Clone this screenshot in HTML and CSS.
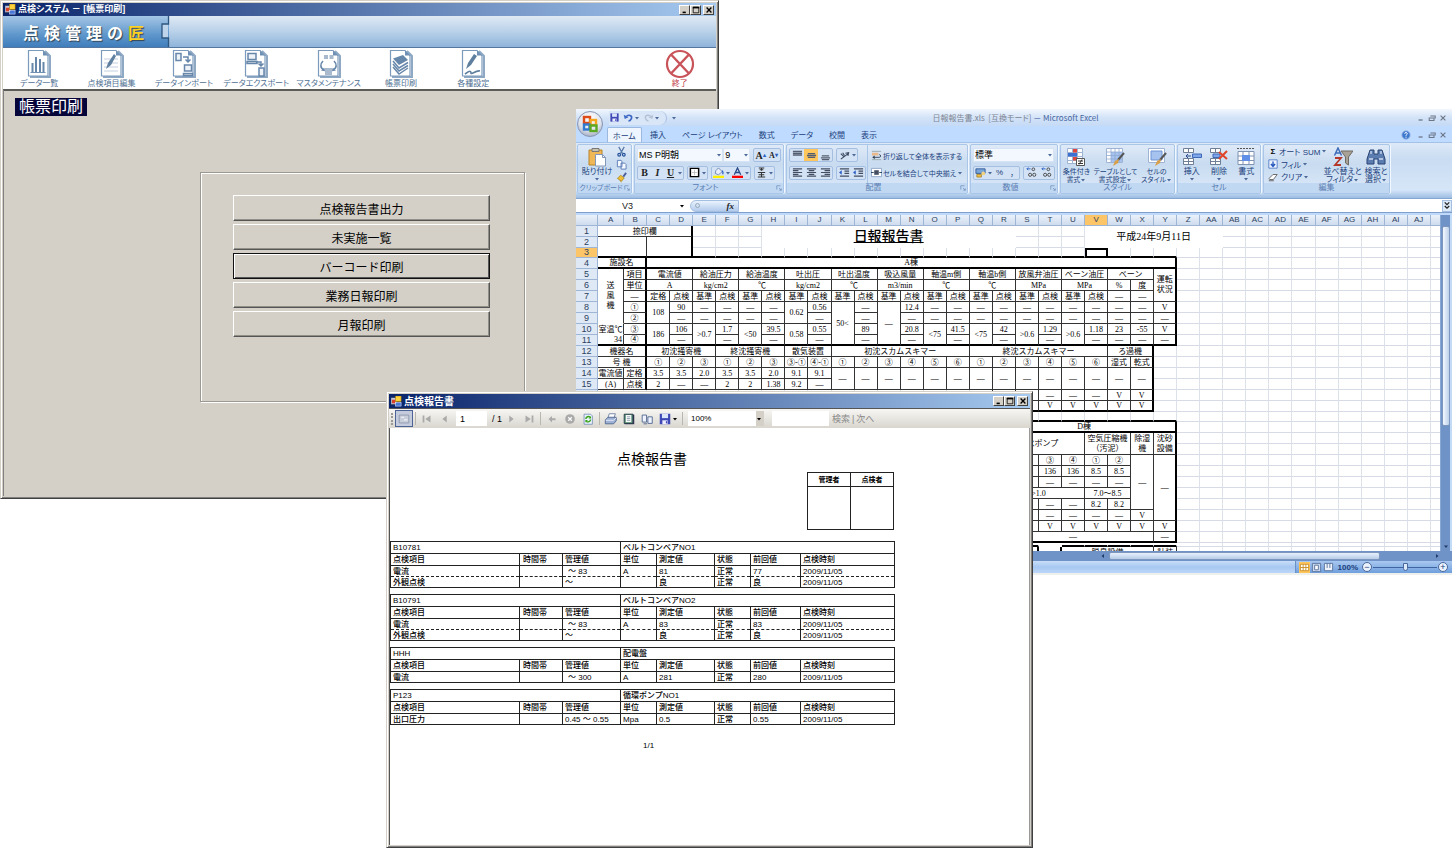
FILE: index.html
```
<!DOCTYPE html>
<html lang="ja">
<head>
<meta charset="utf-8">
<title>点検システム</title>
<link rel="stylesheet" href="styles.css">
</head>
<body>
<svg class="defs" aria-hidden="true">
  <symbol id="app" viewBox="0 0 12 12"><rect x="0" y="2" width="6" height="7" fill="#c8d4f0" stroke="#555" stroke-width=".6"/><rect x="1" y="4" width="4" height="4" fill="#d8412c"/><rect x="5" y="0" width="6" height="6" fill="#ffd23c" stroke="#a77a00" stroke-width=".6"/><rect x="5" y="7" width="6" height="4" fill="#4a78d8" stroke="#dfe8ff" stroke-width=".6"/></symbol>
  <symbol id="min" viewBox="0 0 10 10"><rect x="2" y="7" width="4" height="2"/></symbol>
  <symbol id="max" viewBox="0 0 10 10"><path d="M1.5 1.5h7v7h-7z" fill="none" stroke="#000"/><path d="M1 1h8v2H1z"/></symbol>
  <symbol id="cls" viewBox="0 0 10 10"><path d="M2 2l6 6M8 2l-6 6" stroke="#000" stroke-width="1.7"/></symbol>
  <symbol id="page" viewBox="0 0 24 30"><path d="M18 2l5 5v21H3" fill="none" stroke="#8fa9c4" stroke-width="2"/><path d="M1.500 1.500H16l5 5V27H1.500z" fill="#fff" stroke="#7c9abb" stroke-width="1.200"/><path d="M16 1.500v5h5z" fill="#6f90b4"/></symbol>
  <symbol id="i-list" viewBox="0 0 24 30"><use href="#page"/><path d="M3.500 23.500h15" stroke="#7190b2"/><path d="M5.500 14v9M9 8v15M13 10v13M16.500 13v10" stroke="#6787aa" stroke-width="2"/></symbol>
  <symbol id="i-edit" viewBox="0 0 24 30"><use href="#page"/><path d="M4 10h14M4 14h14M4 18h14M4 22h14" stroke="#c2cfdd"/><path d="M6 20l2-6 6-9 2 2-5 9z" fill="#5f7f9f"/></symbol>
  <symbol id="i-imp" viewBox="0 0 24 30"><use href="#page"/><path d="M4 4.500h5v7H4zM12.500 16h7v6h-7zM11.500 24.500h9v2h-9z" fill="#eef3f8" stroke="#6787aa" stroke-width="1.500"/><path d="M11 8h5v4M13.500 10.500L16 13l2.500-2.500" fill="none" stroke="#6787aa" stroke-width="1.500"/></symbol>
  <symbol id="i-exp" viewBox="0 0 24 30"><use href="#page"/><path d="M4 4.500h8v6H4zM3 12.500h10v2H3zM15 19h5v8h-5z" fill="#eef3f8" stroke="#6787aa" stroke-width="1.500"/><path d="M12 13h5v3M14.500 14.500L17 17l2.500-2.500" fill="none" stroke="#6787aa" stroke-width="1.500"/></symbol>
  <symbol id="i-mst" viewBox="0 0 24 30"><use href="#page"/><path d="M7 6h4v4H7zM12.500 6h4v4h-4zM8 19h7v7H8z" fill="#a9bace"/><path d="M6 12c-3 3-3 7 1 9M17 12c3 3 3 7-1 9" fill="none" stroke="#6787aa" stroke-width="1.600"/><path d="M4 21.500l4 .8-.6-3.600zM19 21.500l-4 .8.6-3.600z" fill="#6787aa"/></symbol>
  <symbol id="i-prn" viewBox="0 0 24 30"><use href="#page"/><path d="M4 9.500L14 6l5 5-9 5z" fill="#6787aa"/><path d="M4 12l6 7 9-5.500M4 15l6 7 9-5.500M4 18l6 7 9-6" fill="none" stroke="#6787aa" stroke-width="1.500"/></symbol>
  <symbol id="i-set" viewBox="0 0 24 30"><use href="#page"/><path d="M5 20l2-6 6-9 3 2-6 9z" fill="#5f7f9f"/><path d="M4 25c5-4 6-3 6-1s5-3 9-2" fill="none" stroke="#5f7f9f" stroke-width="1.700"/></symbol>
  <symbol id="i-end" viewBox="0 0 30 30"><circle cx="15" cy="15" r="13" fill="none" stroke="#c8545a" stroke-width="2.200"/><path d="M6.500 6l17 18M23.500 6l-17 18" stroke="#c8545a" stroke-width="2.400"/></symbol>

  <symbol id="r-tree" viewBox="0 0 16 16"><path d="M2.500 3.500h11v9h-11z" fill="#c9cedb" stroke="#8e96ab"/><path d="M5 6h3M8 9h4" stroke="#fff"/></symbol>
  <symbol id="r-first" viewBox="0 0 16 16"><path d="M4 4v8" stroke="#aaa" stroke-width="2"/><path d="M12 4v8L6 8z" fill="#aaa"/></symbol>
  <symbol id="r-prev" viewBox="0 0 16 16"><path d="M10 4v8L5 8z" fill="#aaa"/></symbol>
  <symbol id="r-next" viewBox="0 0 16 16"><path d="M6 4v8l5-4z" fill="#aaa"/></symbol>
  <symbol id="r-last" viewBox="0 0 16 16"><path d="M12 4v8" stroke="#aaa" stroke-width="2"/><path d="M4 4v8l6-4z" fill="#aaa"/></symbol>
  <symbol id="r-back" viewBox="0 0 16 16"><path d="M4 8l4-3.500V7h4v2.500H8V12z" fill="#aaa"/></symbol>
  <symbol id="r-stop" viewBox="0 0 16 16"><circle cx="8" cy="8" r="5.500" fill="#aaa"/><path d="M6 6l4 4M10 6l-4 4" stroke="#fff" stroke-width="1.300"/></symbol>
  <symbol id="r-ref" viewBox="0 0 16 16"><path d="M3.500 2.500H11l2 2v9.500H3.500z" fill="#e9f2ff" stroke="#7c92b8"/><path d="M5.500 8a3 3 0 015-2M11 8.500a3 3 0 01-5 2" fill="none" stroke="#3ba316" stroke-width="1.600"/><path d="M11.500 4.500v3h-3zM5 12V9h3z" fill="#3ba316"/></symbol>
  <symbol id="r-print" viewBox="0 0 16 16"><path d="M6 2h7l-2 6H4z" fill="#fff" stroke="#6c7ea0"/><path d="M1.500 9l3-3h9.500v4l-3 3.500H1.500z" fill="#9db2d4" stroke="#4c628c"/><path d="M2 9.500h9l3-3" fill="none" stroke="#eef"/></symbol>
  <symbol id="r-lay" viewBox="0 0 16 16"><path d="M3 3h11v11H3z" fill="#335"/><path d="M2.500 2.500h10v10.500h-10z" fill="#6fa38a" stroke="#234"/><path d="M4.500 3.500h6v8h-6z" fill="#fff"/><path d="M5.500 5.500h4M5.500 7.500h4M5.500 9.500h4" stroke="#89a"/></symbol>
  <symbol id="r-pages" viewBox="0 0 16 16"><path d="M2.500 3.500h5v8h-5zM9 5.500h5V13H9z" fill="#eef3ff" stroke="#4c628c"/><path d="M4 13.500h4" stroke="#4c628c"/></symbol>
  <symbol id="save" viewBox="0 0 16 16"><path d="M2 2h12v12H2z" fill="#3e49b5"/><path d="M4.500 2h7v5h-7z" fill="#dce6fa"/><path d="M5 9.500h6V14H5z" fill="#eef"/><path d="M9 10.500h1.500V13H9z" fill="#3e49b5"/></symbol>
  <symbol id="dd" viewBox="0 0 6 6"><path d="M1 2h4L3 4.500z" fill="currentColor"/></symbol>

  <symbol id="office" viewBox="0 0 28 28"><defs><radialGradient id="og" cx=".5" cy=".3" r=".75"><stop offset="0" stop-color="#fff"/><stop offset=".6" stop-color="#dfe3ec"/><stop offset="1" stop-color="#9aa5bd"/></radialGradient></defs><circle cx="14" cy="14" r="12.500" fill="url(#og)" stroke="#8797b5"/><g fill="none" stroke-width="2.400"><rect x="8" y="7" width="6" height="6" stroke="#dd4b1a"/><rect x="14.500" y="10" width="5.500" height="5" stroke="#f4a71c"/><rect x="8" y="14.500" width="5.500" height="5" stroke="#2f79cf"/><rect x="14.500" y="15.500" width="6" height="5.500" stroke="#5aa823"/></g></symbol>
  <symbol id="undo" viewBox="0 0 16 16"><path d="M5 6c5-3 9 0 7 4-1 2-3 3-4 3" fill="none" stroke="#3a66c4" stroke-width="2.400"/><path d="M1 4l1.500 6L8 7.500z" fill="#3a66c4"/></symbol>
  <symbol id="redo" viewBox="0 0 16 16"><path d="M11 6C6 3 2 6 4 10c1 2 3 3 4 3" fill="none" stroke="#b4c0d4" stroke-width="2"/><path d="M15 4l-1.500 6L8 7.500z" fill="#b4c0d4"/></symbol>
  <symbol id="paste" viewBox="0 0 20 20"><path d="M2 3h13v15H2z" fill="#f0b757" stroke="#b98428"/><path d="M5 1.500h7v3H5z" fill="#c9c4b4" stroke="#777"/><path d="M8.500 7.500h7l3 3V19h-10z" fill="#fff" stroke="#8296b8"/><path d="M15.500 7.500v3h3" fill="none" stroke="#8296b8"/></symbol>
  <symbol id="cut" viewBox="0 0 12 12"><path d="M3 1l4 7M9 1L5 8" stroke="#5577a5" stroke-width="1.300"/><circle cx="3.500" cy="9.500" r="1.500" fill="none" stroke="#27539b" stroke-width="1.300"/><circle cx="8.500" cy="9.500" r="1.500" fill="none" stroke="#27539b" stroke-width="1.300"/></symbol>
  <symbol id="copy" viewBox="0 0 12 12"><path d="M1.500 1.500h4l1 1v6h-5zM5.500 4.500h4l1.500 1.500v5H5.500z" fill="#f4f8ff" stroke="#5a7ab5"/></symbol>
  <symbol id="brush" viewBox="0 0 12 12"><path d="M8 5l3-4" stroke="#4a5f9a" stroke-width="2"/><path d="M5 3.500l4 3L6 10 1.500 7z" fill="#f0bf35" stroke="#9a7210" stroke-width=".7"/><path d="M4 9l2 2" stroke="#b98d17"/></symbol>
  <symbol id="border" viewBox="0 0 12 12"><path d="M1.500 1.500h9v9h-9z" fill="#fff" stroke="#000" stroke-width="1.600"/><path d="M6 3v6M3 6h6" stroke="#aaa" stroke-width=".7"/></symbol>
  <symbol id="fill" viewBox="0 0 12 12"><path d="M3 4l3-3 4 4-4 3.500L2.500 7z" fill="#e8eefb" stroke="#556f9f" stroke-width=".8"/><path d="M10 4c1.500 2 1 3 .5 4" stroke="#2b5fc4" fill="none" stroke-width="1.300"/><path d="M0 9.500h12V12H0z" fill="#fff000"/></symbol>
  <symbol id="fcol" viewBox="0 0 12 12"><path d="M2.500 8.500L6 1l3.500 7.500M4 6h4" fill="none" stroke="#2a4988" stroke-width="1.400"/><path d="M0 9.500h12V12H0z" fill="#f00"/></symbol>
  <symbol id="ruby" viewBox="0 0 12 12"><path d="M3 1h6M6 1v3M4 3h4M2 6h8M6 6v5M3 8.500h6M2 11h8" stroke="#333" fill="none" stroke-width="1.100"/></symbol>
  <symbol id="vt" viewBox="0 0 12 12"><path d="M1 1.500h10M1 3.500h10M1 5.500h10" stroke="#555e70" stroke-width="1.500"/></symbol>
  <symbol id="vm" viewBox="0 0 12 12"><path d="M2 4h8M1 6h10M2 8h8" stroke="#555e70" stroke-width="1.500"/></symbol>
  <symbol id="vb" viewBox="0 0 12 12"><path d="M2 6.500h8M1 8.500h10M2 10.500h8" stroke="#555e70" stroke-width="1.400"/></symbol>
  <symbol id="al" viewBox="0 0 12 12"><path d="M1 2h10M1 4h6M1 6h10M1 8h6M1 10h10" stroke="#444d60" stroke-width="1.200"/></symbol>
  <symbol id="ac" viewBox="0 0 12 12"><path d="M1 2h10M3 4h6M1 6h10M3 8h6M1 10h10" stroke="#444d60" stroke-width="1.200"/></symbol>
  <symbol id="ar" viewBox="0 0 12 12"><path d="M1 2h10M5 4h6M1 6h10M5 8h6M1 10h10" stroke="#444d60" stroke-width="1.200"/></symbol>
  <symbol id="ind" viewBox="0 0 12 12"><path d="M1 2h10M6 4.500h5M6 7h5M1 10h10" stroke="#444d60" stroke-width="1.300"/><path d="M0 6l3-2.500v5z" fill="#2b5fc4"/></symbol>
  <symbol id="ang" viewBox="0 0 12 12"><path d="M2 10l8-6M7 3.500L10.500 3l-.8 3.500M2 4l3 3M4 3l2 3" fill="none" stroke="#39465f" stroke-width="1.200"/></symbol>
  <symbol id="wrap" viewBox="0 0 12 12"><path d="M1 1.500h10M1 10.500h10" stroke="#9aa" /><path d="M1 3h7v3H1z" fill="#e9b98a"/><path d="M2 8h7c2 0 2-3 0-3" fill="none" stroke="#345"/><path d="M4 6v4L1.500 8z" fill="#345"/></symbol>
  <symbol id="merge" viewBox="0 0 12 12"><path d="M.5 1.500h11v9H.5z" fill="#fff" stroke="#8ea4c8"/><path d="M3.500 3.500h5v5h-5z" fill="#444d60"/><path d="M0 6h3M9 6h3" stroke="#245"/></symbol>
  <symbol id="cur" viewBox="0 0 12 12"><path d="M1 2h10v5H1z" fill="#7aa6d8" stroke="#345c9a"/><path d="M2 8h5v3H2z" fill="#f1bf42" stroke="#93701a" stroke-width=".7"/><circle cx="9" cy="7" r="2" fill="#f1d382"/></symbol>
  <symbol id="d0" viewBox="0 0 12 12"><path d="M5 2H1M2.500.5L1 2l1.500 1.500" fill="none" stroke="#2b5fc4"/><circle cx="8" cy="2.500" r="1.500" fill="none" stroke="#444"/><circle cx="4.500" cy="8.500" r="1.700" fill="none" stroke="#444"/><circle cx="9" cy="8.500" r="1.700" fill="none" stroke="#444"/></symbol>
  <symbol id="cond" viewBox="0 0 20 20"><path d="M1.500 1.500h15v15h-15zM6.500 1.500v15M11.500 1.500v15M1.500 5.500h15M1.500 9.500h15M1.500 13.500h15" fill="#fff" stroke="#9fb3d2"/><path d="M7 2h4v3.500H7zM7 10h4v3.500H7z" fill="#e2463a"/><path d="M2 6h9v3.500H2z" fill="#3b6fd0"/><path d="M10.500 11.500h8v7h-8z" fill="#fff" stroke="#555"/><path d="M12 14h5M12 16.500h5M16 12.500l-3 5" stroke="#333"/></symbol>
  <symbol id="tbl" viewBox="0 0 20 20"><path d="M1.500 1.500h16v14h-16z" fill="#fff" stroke="#9fb3d2"/><path d="M6 5h11v10H6z" fill="#a6c2ee"/><path d="M6 1.500v14M10 1.500v14M14 1.500v14M1.500 5h16M1.500 8.500h16M1.500 12h16" stroke="#8fa9d2" stroke-width=".8"/><path d="M19 6l-6 7" stroke="#555" stroke-width="2"/><path d="M14 12l-1 4-5 3 2-5z" fill="#d9a048"/></symbol>
  <symbol id="cst" viewBox="0 0 20 20"><path d="M1.500 1.500h16v14h-16z" fill="#fff" stroke="#9fb3d2"/><path d="M4 4h11v9H4z" fill="#a6c2ee" stroke="#6d94d4"/><path d="M19 6l-6 7" stroke="#555" stroke-width="2"/><path d="M14 12l-1 4-5 3 2-5z" fill="#d9a048"/></symbol>
  <symbol id="ins" viewBox="0 0 20 20"><path d="M1.500 1.500h10v4h-10zM6.500 1.500v4M1.500 11.500h10v6h-10zM6.500 11.500v6M1.500 14.500h10" fill="#fff" stroke="#6f7f96"/><path d="M10.500 7h9v3.500h-9z" fill="#7fa6ea" stroke="#3f68b6"/><path d="M9 9H4M6 7L4 9l2 2" fill="none" stroke="#2b4a8a"/></symbol>
  <symbol id="del" viewBox="0 0 20 20"><path d="M1.500 1.500h10v4h-10zM6.500 1.500v4M1.500 11.500h10v6h-10zM6.500 11.500v6M1.500 14.500h10" fill="#fff" stroke="#6f7f96"/><path d="M4 7h7v3.500H4z" fill="#7fa6ea" stroke="#3f68b6"/><path d="M10 5l8 7M18 4l-8 8" stroke="#e04428" stroke-width="2"/></symbol>
  <symbol id="fmt" viewBox="0 0 20 20"><path d="M1 1.500h18" stroke="#555" stroke-dasharray="2 1"/><path d="M2 4.500h16v13H2zM7 4.500v13M13 4.500v13M2 9h16M2 13.500h16" fill="#fff" stroke="#7f92b2"/><path d="M6 8h8v6H6z" fill="#5f8fe6"/></symbol>
  <symbol id="fdn" viewBox="0 0 12 12"><path d="M1 1h10v10H1z" fill="#eaf2ff" stroke="#4a76c4"/><path d="M6 3v5M3.500 6L6 9l2.500-3" fill="none" stroke="#2356bd" stroke-width="1.600"/></symbol>
  <symbol id="ers" viewBox="0 0 12 12"><path d="M1 8l5-5h5L6.500 9H2z" fill="#fff" stroke="#555"/><path d="M1 10.500h6" stroke="#555"/></symbol>
  <symbol id="sort" viewBox="0 0 20 20"><path d="M1.500 8.500L5 1l3.500 7.500M3 6h4" fill="none" stroke="#3d6cb8" stroke-width="1.500"/><path d="M2 11h6l-6 7h6" fill="none" stroke="#b5372a" stroke-width="1.800"/><path d="M8 4h12l-4.500 6v8l-3-2v-6z" fill="#a8a196" stroke="#6f6a62"/></symbol>
  <symbol id="bino" viewBox="0 0 20 20"><path d="M4 3h4v4h4V3h4l3 9v5h-7v-5H8v5H1v-5z" fill="#5b7cae" stroke="#2b4574"/><path d="M3 12h4M13 12h4M5 4v3M15 4v3" stroke="#cfdcf2" stroke-width="1.300"/></symbol>
  <symbol id="help" viewBox="0 0 12 12"><circle cx="6" cy="6" r="5" fill="#3d79cf" stroke="#9cb8e2"/><path d="M4.500 4.500c0-2 3-2 3 0 0 1-1.500 1-1.500 2.500M6 8v1.300" stroke="#fff" fill="none" stroke-width="1.200"/></symbol>
  <symbol id="lch" viewBox="0 0 8 8"><path d="M1 6V1h5M4 4l3 3M7 4.500V7H4.500" fill="none" stroke="#6d8fbd"/></symbol>
  <symbol id="xmin" viewBox="0 0 10 10"><path d="M2 7.500h5" stroke="#6c7687" stroke-width="1.600"/></symbol>
  <symbol id="xmax" viewBox="0 0 10 10"><path d="M3 2.500h6v3M1.500 5h6v3h-6z" fill="none" stroke="#6c7687" stroke-width="1.300"/></symbol>
  <symbol id="xcls" viewBox="0 0 10 10"><path d="M2 2l6 6M8 2L2 8" stroke="#6c7687" stroke-width="1.400"/></symbol>
  <symbol id="chev" viewBox="0 0 8 10"><path d="M1.500 1.500L4 4l2.500-2.500M1.500 5.500L4 8l2.500-2.500" fill="none" stroke="#222" stroke-width="1.400"/></symbol>
  <symbol id="v1" viewBox="0 0 12 12"><path d="M1.500 2.500h9v7h-9zM1.500 6h9M4.500 2.500v7M7.500 2.500v7" fill="#fff" stroke="#c98f25"/></symbol>
  <symbol id="v2" viewBox="0 0 12 12"><path d="M1.500 1.500h9v9h-9z" fill="#cdd9ee" stroke="#58729d"/><path d="M4 3.500h4v5H4z" fill="#fff" stroke="#58729d"/></symbol>
  <symbol id="v3" viewBox="0 0 12 12"><path d="M1.500 1.500h9v8h-9zM4.500 1.500v5M7.500 1.500v5" fill="#eef3fb" stroke="#58729d"/></symbol>
</svg>

<main class="desktop">

<section class="win main-win">
  <header class="caption">
    <svg class="app-ico"><use href="#app"/></svg>
    <h1>点検システム － [帳票印刷]</h1>
    <div class="sysbtns">
      <button aria-label="最小化"><svg><use href="#min"/></svg></button><button aria-label="最大化"><svg><use href="#max"/></svg></button><button class="x" aria-label="閉じる"><svg><use href="#cls"/></svg></button>
    </div>
  </header>
  <div class="banner">
    <div class="brand"><span>点</span><span>検</span><span>管</span><span>理</span><span>の</span><span class="gold">匠</span></div>
    <svg class="notch" viewBox="0 0 9 31"><path d="M7 8H1v14h6z" fill="#bdd4eb"/><path d="M7.500 0v8h-6.500v14h6.500v9" fill="none" stroke="#2c557f" stroke-width="1.300"/></svg>
  </div>
  <nav class="tools">
    <button><svg><use href="#i-list"/></svg>データ一覧</button>
    <button><svg><use href="#i-edit"/></svg>点検項目編集</button>
    <button><svg><use href="#i-imp"/></svg>データインポート</button>
    <button><svg><use href="#i-exp"/></svg>データエクスポート</button>
    <button><svg><use href="#i-mst"/></svg>マスタメンテナンス</button>
    <button><svg><use href="#i-prn"/></svg>帳票印刷</button>
    <button><svg><use href="#i-set"/></svg>各種設定</button>
    <button class="end"><svg><use href="#i-end"/></svg>終了</button>
  </nav>
  <div class="client">
    <h2>帳票印刷</h2>
    <div class="group">
      <button>点検報告書出力</button>
      <button>未実施一覧</button>
      <button class="default">バーコード印刷</button>
      <button>業務日報印刷</button>
      <button>月報印刷</button>
    </div>
  </div>
</section>

<section class="excel">
  <header class="x-title">
    <button class="orb" aria-label="Office ボタン"><svg><use href="#office"/></svg></button>
    <div class="qat">
      <button aria-label="保存"><svg><use href="#save"/></svg></button>
      <button aria-label="元に戻す"><svg><use href="#undo"/></svg><svg class="d"><use href="#dd"/></svg></button>
      <button class="dim" aria-label="やり直し"><svg><use href="#redo"/></svg><svg class="d"><use href="#dd"/></svg></button>
    </div>
    <svg class="d more"><use href="#dd"/></svg>
    <h1><span>日報報告書.xls&nbsp; [互換モード]</span> － Microsoft Excel</h1>
    <div class="xsys"><button aria-label="最小化"><svg><use href="#xmin"/></svg></button><button aria-label="元に戻す"><svg><use href="#xmax"/></svg></button><button aria-label="閉じる"><svg><use href="#xcls"/></svg></button></div>
  </header>
  <nav class="x-tabs">
    <button class="on">ホーム</button><button>挿入</button><button>ページ レイアウト</button><button>数式</button><button>データ</button><button>校閲</button><button>表示</button>
    <div class="xsys"><button aria-label="ヘルプ"><svg class="help"><use href="#help"/></svg></button><button aria-label="最小化"><svg><use href="#xmin"/></svg></button><button aria-label="元に戻す"><svg><use href="#xmax"/></svg></button><button aria-label="閉じる"><svg><use href="#xcls"/></svg></button></div>
  </nav>
  <div class="ribbon">
    <div class="rg g-clip">
      <div class="rb">
        <button class="big">
          <svg><use href="#paste"/></svg>貼り付け<svg class="d"><use href="#dd"/></svg></button>
        <div class="stack">
          <button aria-label="切り取り"><svg><use href="#cut"/></svg></button><button aria-label="コピー"><svg><use href="#copy"/></svg></button><button aria-label="書式のコピー"><svg><use href="#brush"/></svg></button>
        </div>
      </div>
      <h3><span>クリップボード</span><svg><use href="#lch"/></svg></h3>
    </div>
    <div class="rg g-font">
      <div class="rb two">
        <div class="ln">
          <label class="combo fname"><select aria-label="フォント"><option>MS P明朝</option></select><svg class="d"><use href="#dd"/></svg></label>
          <label class="combo fsize"><select aria-label="サイズ"><option>9</option></select><svg class="d"><use href="#dd"/></svg></label>
          <div class="seg push"><button class="serif">A<sup>▴</sup></button><button class="serif sm">A<sup>▾</sup></button></div>
        </div>
        <div class="ln">
          <div class="seg"><button class="serif">B</button><button class="serif it">I</button><button class="serif ul">U</button><svg class="d"><use href="#dd"/></svg></div>
          <div class="seg"><button aria-label="罫線"><svg><use href="#border"/></svg></button><svg class="d"><use href="#dd"/></svg></div>
          <div class="seg"><button aria-label="塗りつぶし"><svg><use href="#fill"/></svg></button><svg class="d"><use href="#dd"/></svg><button aria-label="フォントの色"><svg><use href="#fcol"/></svg></button><svg class="d"><use href="#dd"/></svg></div>
          <div class="seg"><button aria-label="ふりがな"><svg><use href="#ruby"/></svg></button><svg class="d"><use href="#dd"/></svg></div>
        </div>
      </div>
      <h3><span>フォント</span><svg><use href="#lch"/></svg></h3>
    </div>
    <div class="rg g-align">
      <div class="rb">
        <div class="two al">
          <div class="ln"><div class="seg"><button aria-label="上揃え"><svg><use href="#vt"/></svg></button><button class="hot" aria-label="上下中央"><svg><use href="#vm"/></svg></button><button aria-label="下揃え"><svg><use href="#vb"/></svg></button></div><div class="seg"><button aria-label="方向"><svg><use href="#ang"/></svg></button><svg class="d"><use href="#dd"/></svg></div></div>
          <div class="ln"><div class="seg"><button aria-label="左揃え"><svg><use href="#al"/></svg></button><button aria-label="中央揃え"><svg><use href="#ac"/></svg></button><button aria-label="右揃え"><svg><use href="#ar"/></svg></button></div><div class="seg"><button aria-label="インデント解除"><svg><use href="#ind"/></svg></button><button aria-label="インデント"><svg><use href="#ind"/></svg></button></div></div>
        </div>
        <div class="two txt">
          <button><svg><use href="#wrap"/></svg>折り返して全体を表示する</button>
          <button><svg><use href="#merge"/></svg>セルを結合して中央揃え<svg class="d"><use href="#dd"/></svg></button>
        </div>
      </div>
      <h3><span>配置</span><svg><use href="#lch"/></svg></h3>
    </div>
    <div class="rg g-num">
      <div class="rb two">
        <div class="ln"><label class="combo nfmt"><select aria-label="表示形式"><option>標準</option></select><svg class="d"><use href="#dd"/></svg></label></div>
        <div class="ln"><div class="seg"><button aria-label="通貨"><svg><use href="#cur"/></svg></button><svg class="d"><use href="#dd"/></svg><button>%</button><button>，</button></div><div class="seg"><button aria-label="小数点を増やす"><svg><use href="#d0"/></svg></button><button aria-label="小数点を減らす"><svg><use href="#d0"/></svg></button></div></div>
      </div>
      <h3><span>数値</span><svg><use href="#lch"/></svg></h3>
    </div>
    <div class="rg g-style">
      <div class="rb bigs">
        <button class="big"><svg><use href="#cond"/></svg>条件付き<span>書式<svg class="d"><use href="#dd"/></svg></span></button>
        <button class="big"><svg><use href="#tbl"/></svg>テーブルとして<span>書式設定<svg class="d"><use href="#dd"/></svg></span></button>
        <button class="big"><svg><use href="#cst"/></svg>セルの<span>スタイル<svg class="d"><use href="#dd"/></svg></span></button>
      </div>
      <h3><span>スタイル</span></h3>
    </div>
    <div class="rg g-cell">
      <div class="rb bigs">
        <button class="big"><svg><use href="#ins"/></svg>挿入<svg class="d"><use href="#dd"/></svg></button>
        <button class="big"><svg><use href="#del"/></svg>削除<svg class="d"><use href="#dd"/></svg></button>
        <button class="big"><svg><use href="#fmt"/></svg>書式<svg class="d"><use href="#dd"/></svg></button>
      </div>
      <h3><span>セル</span></h3>
    </div>
    <div class="rg g-edit">
      <div class="rb">
        <div class="three">
          <button><b>Σ</b>オート SUM<svg class="d"><use href="#dd"/></svg></button>
          <button><svg><use href="#fdn"/></svg>フィル<svg class="d"><use href="#dd"/></svg></button>
          <button><svg><use href="#ers"/></svg>クリア<svg class="d"><use href="#dd"/></svg></button>
        </div>
        <button class="big"><svg><use href="#sort"/></svg>並べ替えと<span>フィルタ<svg class="d"><use href="#dd"/></svg></span></button>
        <button class="big"><svg><use href="#bino"/></svg>検索と<span>選択<svg class="d"><use href="#dd"/></svg></span></button>
      </div>
      <h3><span>編集</span></h3>
    </div>
  </div>
  <div class="fbar">
    <input class="cellname" aria-label="名前ボックス" value="V3"><svg class="d"><use href="#dd"/></svg>
    <span class="fx"><i></i><em>fx</em></span>
    <input class="formula" aria-label="数式バー">
    <button aria-label="展開"><svg><use href="#chev"/></svg></button>
  </div>
  <div class="book">
    <div class="sheet"><table id="sheet" class="grid"></table></div>
    <div class="vbar"><i class="vthumb"></i><svg class="d"><use href="#dd"/></svg></div>
  </div>
  <div class="hbar"><svg class="d left"><use href="#dd"/></svg><i class="hthumb"></i><svg class="d right"><use href="#dd"/></svg></div>
  <footer class="status">
    <div class="zoomer">
      <button class="hot" aria-label="標準"><svg><use href="#v1"/></svg></button><button aria-label="ページ レイアウト"><svg><use href="#v2"/></svg></button><button aria-label="改ページ"><svg><use href="#v3"/></svg></button>
      <span>100%</span>
      <button class="rnd">−</button><input type="range" aria-label="ズーム" value="50"><button class="rnd">+</button>
    </div>
  </footer>
</section>

<section class="win report">
  <header class="caption">
    <svg class="app-ico"><use href="#app"/></svg>
    <h1>点検報告書</h1>
    <div class="sysbtns">
      <button aria-label="最小化"><svg><use href="#min"/></svg></button><button aria-label="最大化"><svg><use href="#max"/></svg></button><button class="x" aria-label="閉じる"><svg><use href="#cls"/></svg></button>
    </div>
  </header>
  <div class="rtools">
    <i class="grip"></i>
    <button class="sel" aria-label="見出しマップ"><svg><use href="#r-tree"/></svg></button><i class="sep"></i>
    <button aria-label="先頭"><svg><use href="#r-first"/></svg></button><button aria-label="前へ"><svg><use href="#r-prev"/></svg></button>
    <input class="pg" aria-label="ページ" value="1"><span class="of">/ 1</span>
    <button aria-label="次"><svg><use href="#r-next"/></svg></button><button aria-label="最後"><svg><use href="#r-last"/></svg></button><i class="sep"></i>
    <button aria-label="戻る"><svg><use href="#r-back"/></svg></button><button aria-label="中止"><svg><use href="#r-stop"/></svg></button><button aria-label="更新"><svg><use href="#r-ref"/></svg></button><i class="sep"></i>
    <button aria-label="印刷"><svg><use href="#r-print"/></svg></button><button aria-label="印刷レイアウト"><svg><use href="#r-lay"/></svg></button><button aria-label="ページ設定"><svg><use href="#r-pages"/></svg></button><button class="wide" aria-label="エクスポート"><svg><use href="#save"/></svg><svg class="d"><use href="#dd"/></svg></button><i class="sep"></i>
    <label class="zoomsel"><select aria-label="倍率"><option>100%</option></select><span><svg class="d"><use href="#dd"/></svg></span></label>
    <input class="find" aria-label="検索文字列">
    <span class="links"><button>検索</button> | <button>次へ</button></span>
  </div>
  <div class="paper">
    <h2>点検報告書</h2>
    <table class="sign"><tr><th>管理者</th><th>点検者</th></tr><tr><td></td><td></td></tr></table>
    <table class="rep">
      <colgroup><col class="c1"><col class="c2"><col class="c3"><col class="c4"><col class="c5"><col class="c6"><col class="c7"><col class="c8"></colgroup>
      <tr><td colspan="3">B10781</td><td colspan="5">ベルトコンベアNO1</td></tr>
      <tr><th>点検項目</th><th>時間帯</th><th>管理値</th><th>単位</th><th>測定値</th><th>状態</th><th>前回値</th><th>点検時刻</th></tr>
      <tr class="dash"><td>電流</td><td></td><td class="in">～ 83</td><td>A</td><td>81</td><td>正常</td><td>77</td><td>2009/11/05</td></tr>
      <tr><td>外観点検</td><td></td><td>～</td><td></td><td>良</td><td>正常</td><td>良</td><td>2009/11/05</td></tr>
    </table>
    <table class="rep">
      <colgroup><col class="c1"><col class="c2"><col class="c3"><col class="c4"><col class="c5"><col class="c6"><col class="c7"><col class="c8"></colgroup>
      <tr><td colspan="3">B10791</td><td colspan="5">ベルトコンベアNO2</td></tr>
      <tr><th>点検項目</th><th>時間帯</th><th>管理値</th><th>単位</th><th>測定値</th><th>状態</th><th>前回値</th><th>点検時刻</th></tr>
      <tr class="dash"><td>電流</td><td></td><td class="in">～ 83</td><td>A</td><td>83</td><td>正常</td><td>83</td><td>2009/11/05</td></tr>
      <tr><td>外観点検</td><td></td><td>～</td><td></td><td>良</td><td>正常</td><td>良</td><td>2009/11/05</td></tr>
    </table>
    <table class="rep">
      <colgroup><col class="c1"><col class="c2"><col class="c3"><col class="c4"><col class="c5"><col class="c6"><col class="c7"><col class="c8"></colgroup>
      <tr><td colspan="3">HHH</td><td colspan="5">配電盤</td></tr>
      <tr><th>点検項目</th><th>時間帯</th><th>管理値</th><th>単位</th><th>測定値</th><th>状態</th><th>前回値</th><th>点検時刻</th></tr>
      <tr><td>電流</td><td></td><td class="in">～ 300</td><td>A</td><td>281</td><td>正常</td><td>280</td><td>2009/11/05</td></tr>
    </table>
    <table class="rep">
      <colgroup><col class="c1"><col class="c2"><col class="c3"><col class="c4"><col class="c5"><col class="c6"><col class="c7"><col class="c8"></colgroup>
      <tr><td colspan="3">P123</td><td colspan="5">循環ポンプNO1</td></tr>
      <tr><th>点検項目</th><th>時間帯</th><th>管理値</th><th>単位</th><th>測定値</th><th>状態</th><th>前回値</th><th>点検時刻</th></tr>
      <tr><td>出口圧力</td><td></td><td>0.45 ～ 0.55</td><td>Mpa</td><td>0.5</td><td>正常</td><td>0.55</td><td>2009/11/05</td></tr>
    </table>
    <p class="pageno">1/1</p>
  </div>
</section>
</main>
<script src="sheet.js"></script>
</body>
</html>
```
FILE: styles.css
```
* { box-sizing: border-box; }
html, body { margin: 0; }
body { background: #fff; font-family: "Liberation Sans", "Noto Sans CJK JP", sans-serif; font-size: 9px; color: #000; }
button, input, select { font: inherit; color: inherit; border: 0; padding: 0; margin: 0; background: none; border-radius: 0; }
button { display: inline-flex; align-items: center; justify-content: center; white-space: nowrap; }
select { appearance: none; }
h1, h2, h3, p { margin: 0; font-weight: normal; font-size: inherit; }
svg { display: block; flex: none; }
.defs { position: absolute; width: 0; height: 0; }
.d { width: 6px; height: 6px; color: #4a6898; }
.desktop { position: relative; min-height: 100vh; overflow: hidden; }

/* Classic windows */
.win { position: absolute; display: flex; flex-direction: column; background: #d4d0c8; border: 1px solid; border-color: #d4d0c8 #404040 #404040 #d4d0c8; box-shadow: inset 1px 1px #fff, inset -1px -1px #808080; padding: 2px; }
.main-win { left: 0; top: 0; width: 719px; height: 499px; }
.caption { display: flex; align-items: center; flex: none; height: 13px; padding: 0 2px; background: linear-gradient(90deg, #0a246a, #a6caf0); color: #fff; }
.app-ico { width: 11px; height: 11px; }
.caption h1 { flex: 1; padding-left: 2px; font-size: 9px; line-height: 13px; font-weight: bold; white-space: nowrap; font-feature-settings: "palt"; }
.sysbtns { display: flex; }
.sysbtns button { width: 11px; height: 10px; background: #d4d0c8; border: 1px solid; border-color: #fff #404040 #404040 #fff; }
.sysbtns .x { margin-left: 2px; }
.sysbtns svg { width: 8px; height: 8px; }

.banner { display: flex; flex: none; height: 32px; border-bottom: 1px solid #55779f; background: linear-gradient(#dfe9f4, #b9d1e9 50%, #8fb4da); }
.brand { display: flex; align-items: center; gap: 5px; width: 166px; padding-left: 20px; color: #fff; font-size: 16px; font-weight: bold; background: linear-gradient(#a5c6e6, #5f97cc 60%, #3f7dbb); text-shadow: 1px 1px 1px #345; }
.gold { color: #ffd21f; }
.notch { width: 9px; height: 31px; margin-left: -8px; }
.tools { display: flex; flex: none; height: 41px; background: #fff; }
.tools button { flex: 0 0 10.15%; flex-direction: column; justify-content: flex-start; padding-top: 1px; color: #4f7092; font-size: 8px; line-height: 10px; font-feature-settings: "palt"; }
.tools svg { width: 24px; height: 30px; }
.tools .end { margin-left: auto; color: #c0393f; }
.tools .end svg { width: 30px; }
.client { flex: 1; border-top: 2px solid #5b5b57; border-left: 1px solid #808080; padding: 7px 11px; }
.client h2 { display: inline-block; padding: 0 4px; background: #05053a; color: #fff; font-size: 16px; line-height: 18px; }
.group { display: flex; flex-direction: column; gap: 3px; width: 325px; margin: 56px 0 0 185px; height: 230px; padding: 22px 34px 0 32px; border: 1px solid #9b9891; box-shadow: inset 1px 1px #fff, 1px 1px #fff; }
.group button { height: 26px; font-size: 12px; border: 1px solid; border-color: #fff #555 #555 #fff; box-shadow: inset -1px -1px #909088; }
.group .default { border-color: #111; box-shadow: inset 1px 1px #fff, inset -1px -1px #555; }

/* Spreadsheet window */
.excel { position: absolute; left: 576px; right: 0; top: 109px; display: flex; flex-direction: column; background: #bfd9fb; border-bottom: 2px solid #eef0ee; color: #1b3f7c; }
.excel button, .excel h3 { font-feature-settings: "palt"; }
.x-title { position: relative; display: flex; align-items: center; height: 17px; padding: 0 4px 0 33px; background: linear-gradient(#f2f7fe, #d3e3f8 50%, #c5daf6); }
.orb { position: absolute; left: 0; top: 1px; z-index: 1; }
.orb svg { width: 28px; height: 28px; }
.qat { display: flex; gap: 3px; height: 14px; padding: 0 6px 0 0; border-radius: 0 8px 8px 0; border-right: 1px solid #a9c0e0; background: #d9e6f8; }
.qat svg { width: 11px; height: 11px; }
.qat .d, .more { width: 6px; height: 6px; }
.more { margin-left: 4px; }
.x-title h1 { flex: 1; padding-right: 62px; text-align: center; font-family: "Noto Sans CJK JP", sans-serif; font-size: 8px; color: #4566a0; white-space: nowrap; font-feature-settings: "palt"; }
.x-title h1 span { color: #7d8592; }
.xsys { display: flex; gap: 1px; }
.xsys svg { width: 10px; height: 8px; }
.xsys .help { height: 10px; margin-right: 4px; }
.x-tabs { display: flex; height: 16px; padding: 1px 4px 0 31px; background: #bfdbff; }
.x-tabs > button { padding: 0 8px; font-size: 8px; }
.x-tabs .on { padding: 0 5px; background: #eef5fe; border: 1px solid #9ab8e0; border-bottom: 0; border-radius: 2px 2px 0 0; }
.x-tabs .xsys { margin-left: auto; }
.ribbon { display: flex; gap: 2px; height: 57px; padding: 1px 0 4px 1px; background: linear-gradient(#dde9f7, #c9dcf2 30%, #d6e6f8 85%, #9dbde4); border-top: 1px solid #a4c2e8; border-bottom: 1px solid #84a6d2; }
.rg { display: flex; flex-direction: column; border: 1px solid #a9c5e8; border-radius: 2px; box-shadow: 1px 0 #f2f8ff; background: linear-gradient(#dfeaf8, #c8dbf0 40%, #dceafa); font-size: 8px; }
.rg h3 { display: flex; height: 10px; line-height: 9px; background: #c1d8f2; color: #5a7eb2; font-size: 8px; }
.rg h3 span { flex: 1; text-align: center; white-space: nowrap; }
.rg h3 svg { width: 6px; height: 6px; margin: 2px 1px 0 0; }
.g-clip h3 { font-size: 7px; }
.rb { display: flex; flex: 1; min-height: 0; }
.g-clip { width: 55px; } .g-font { width: 150px; } .g-align { width: 182px; } .g-num { width: 88px; } .g-style { width: 115px; } .g-cell { width: 84px; } .g-edit { width: 127px; }
.two { display: flex; flex-direction: column; justify-content: space-evenly; }
.ln { display: flex; gap: 3px; padding: 0 2px; }
.seg { display: flex; align-items: center; height: 14px; border: 1px solid #a5bfe2; border-radius: 2px; background: #d3e2f4; }
.push { margin-left: auto; }
.seg button { width: 13px; height: 12px; }
.seg svg { width: 11px; height: 11px; }
.seg .d { width: 6px; height: 6px; }
.g-align .seg button { width: 14px; }
.hot { background: #ffc65c; }
.serif { font: bold 10px "Liberation Serif", serif; color: #222; }
.serif sup { font-size: 6px; line-height: 1; color: #2b5fc4; }
.sm { font-size: 8px; } .it { font-style: italic; } .ul { text-decoration: underline; }
.combo { display: flex; align-items: center; height: 14px; background: #f3f8fe; border: 1px solid #d5e3f5; color: #000; }
.combo select { flex: 1; min-width: 0; padding-left: 1px; font-size: 9px; height: 12px; }
.fname { width: 87px; } .fsize { width: 27px; } .nfmt { width: 81px; }
.g-font .combo + .combo { margin-left: -3px; }
.g-num .seg { flex: 1; justify-content: space-around; }
.al { width: 80px; }
.txt { align-items: flex-start; border-left: 1px solid #a9c5e8; padding-left: 3px; }
.txt button, .three button { height: 13px; gap: 1px; }
.txt button { font-size: 7px; }
.txt svg { width: 11px; height: 11px; }
.txt .d, .three .d { width: 6px; height: 6px; }
.big { display: flex; flex-direction: column; justify-content: flex-start; padding-top: 2px; line-height: 8px; }
.big > svg:first-child { width: 20px; height: 20px; margin-bottom: 1px; }
.big span { display: flex; align-items: center; }
.g-clip .big { width: 38px; }
.g-style .big { font-size: 7px; }
.stack { display: flex; flex-direction: column; gap: 2px; padding-top: 1px; }
.stack svg { width: 11px; height: 11px; }
.bigs { justify-content: space-around; }
.three { display: flex; flex-direction: column; align-items: flex-start; width: 58px; padding-left: 4px; }
.three svg { width: 10px; height: 10px; margin-right: 2px; }
.three b { width: 10px; color: #000; }
.g-edit .big { flex: 1 1 auto; }

.fbar { display: flex; align-items: center; height: 14px; background: #fff; border-bottom: 1px solid #7fa0cc; color: #222; }
.cellname { width: 103px; text-align: center; }
.fbar .d { color: #000; }
.fx { display: flex; justify-content: space-between; align-items: center; width: 49px; height: 12px; margin-left: 5px; padding: 0 4px; border-radius: 6px 0 0 6px; background: linear-gradient(#eaf3fd, #b3cbec); border: 1px solid #a5bfe2; }
.fx i { width: 5px; height: 5px; border-radius: 50%; border: 1px solid #9ab; }
.fx em { font: italic bold 9px "Liberation Serif", serif; }
.formula { flex: 1; min-width: 0; }
.fbar button { width: 10px; height: 12px; border: 1px solid #a5bfe2; background: #dce9f8; }
.fbar button svg { width: 8px; height: 9px; }
.book { display: flex; height: 336px; margin-top: 2px; background: #fff; }
.sheet { flex: 1; min-width: 0; overflow: hidden; }
.vbar { display: flex; flex-direction: column; align-items: center; justify-content: space-between; width: 12px; padding-top: 11px; border-left: 1px solid #89a8d4; border-right: 2px solid #c4dbf8; background: #6f93c6; }
.vthumb { width: 8px; height: 200px; border: 1px solid #7c96bd; border-radius: 2px; background: linear-gradient(90deg, #f3f8ff, #bcd0ea); }
.vbar .d { height: 9px; color: #203a6a; }
.hbar { display: flex; align-items: center; height: 10px; padding: 0 12px 0 524px; background: #6f93c6; }
.hbar .d { color: #203a6a; }
.left { transform: rotate(90deg); }
.right { transform: rotate(-90deg); margin-left: auto; }
.hthumb { flex: 0 0 271px; height: 8px; margin-left: 3px; border: 1px solid #7c96bd; border-radius: 2px; background: linear-gradient(#e7f0fc, #b7cce8); }
.status { display: flex; justify-content: flex-end; height: 12px; background: linear-gradient(#c9def8, #a8c8f2 50%, #bcd6f8); }
.zoomer { display: flex; align-items: center; gap: 1px; padding: 0 4px 0 3px; background: linear-gradient(#a9c8f0, #6f9fdd); border-left: 1px solid #6b90c6; }
.zoomer button { width: 11px; height: 11px; }
.zoomer svg { width: 11px; height: 11px; }
.zoomer span { padding: 0 3px; font-size: 8px; font-weight: bold; }
.zoomer .rnd { width: 10px; height: 10px; border: 1px solid #49699c; border-radius: 50%; background: #eaf2fd; font-size: 9px; line-height: 8px; }
.zoomer input { width: 64px; height: 10px; appearance: none; background: linear-gradient(#3e659f, #3e659f) center / 100% 1px no-repeat; }
.zoomer input::-webkit-slider-thumb { appearance: none; width: 5px; height: 8px; background: #dce9fa; border: 1px solid #49699c; border-radius: 0 0 3px 3px; }

.grid { width: 878px; table-layout: fixed; border-collapse: separate; border-spacing: 0; color: #000; }
.grid .rh { width: 22px; } .grid .ca { width: 26px; } .grid .cn { width: 23px; }
.grid th { height: 11px; padding: 0; background: #dfe8f5; border-right: 1px solid #9fb5d6; border-bottom: 1px solid #9fb5d6; font: 9px/10px "Liberation Sans", sans-serif; color: #2c3f60; }
.grid thead th { background: linear-gradient(#eaf1fa, #cfdcee); font-size: 8px; }
.grid .lit, .grid thead .lit { background: #fcc568; }
.grid tr.short > * { height: 10px; line-height: 9px; }
.grid tr.sliver > * { height: 4px; line-height: 1px; font-size: 1px; }
.grid td { height: 11px; padding: 0; text-align: center; vertical-align: middle; border-right: 1px solid #dde1ea; border-bottom: 1px solid #d6dbe6; font: 9px/9px "Liberation Serif", "Noto Sans CJK JP", serif; white-space: nowrap; }
.grid td.k { border-right-color: #333; border-bottom-color: #333; font-size: 8px; }
.grid td.w { border-color: #fff; }
.grid td.side { border-right-color: #333; }
.grid td.R { border-right: 2px solid #000; }
.grid td.B { border-bottom: 2px solid #000; }
.grid td.r { text-align: right; padding-right: 1px; }
.grid td.ml { white-space: pre-line; line-height: 10px; }
.grid td.title { font-size: 14px; line-height: 18px; font-weight: 500; text-decoration: underline; }
.grid td.date { font-size: 10px; }
.grid td.cur { border: 2px solid #000; }

/* Report viewer */
.report { left: 386px; top: 391px; width: 647px; height: 457px; }
.report .caption { height: 14px; }
.report .caption h1 { font-size: 10px; }
.rtools { display: flex; align-items: center; flex: none; height: 20px; border-top: 1px solid #555; background: linear-gradient(#f7f6f3, #d9d6cf); padding-left: 2px; }
.rtools button { width: 18px; height: 17px; }
.rtools button svg { width: 14px; height: 14px; }
.rtools .d { width: 6px; height: 6px; color: #000; }
.grip { width: 2px; height: 12px; margin-right: 2px; border-left: 2px dotted #999; }
.rtools .sel { border: 1px solid #4d6396; background: #c3cbdd; }
.sep { width: 1px; height: 13px; margin: 0 2px; background: #b9b6ae; }
.pg { width: 31px; height: 15px; margin-left: 2px; padding-left: 4px; background: #fff; }
.of { width: 15px; text-align: right; white-space: nowrap; }
.rtools .wide { width: 24px; }
.rtools .wide .d { width: 6px; height: 6px; }
.zoomsel { display: flex; width: 76px; height: 15px; margin-left: 3px; background: #fff; font-size: 8px; }
.zoomsel select { flex: 1; padding-left: 3px; }
.zoomsel span { display: flex; align-items: center; width: 8px; background: #d4d0c8; }
.find { width: 57px; height: 15px; margin-left: 8px; background: #fff; }
.links { display: flex; align-items: center; gap: 2px; margin-left: 3px; color: #888; }
.rtools .links button { width: 18px; }
.paper { flex: 1; display: flex; flex-direction: column; background: #fff; border-left: 1px solid #555; border-right: 1px solid #999; }
.paper h2 { width: 524px; padding-top: 21px; text-align: center; font-size: 14px; line-height: 20px; }
.sign { width: 87px; margin: 3px 0 11px 417px; border-collapse: collapse; table-layout: fixed; }
.sign th, .sign td { border: 1px solid #222; padding: 0; font-size: 7px; line-height: 12px; }
.sign th { height: 14px; } .sign td { height: 43px; }
.rep { width: 504px; margin-bottom: 6px; border-collapse: collapse; table-layout: fixed; }
.rep td, .rep th { height: 12px; padding: 0 0 0 2px; border: 1px solid #222; text-align: left; font-weight: 500; font-size: 8px; line-height: 9px; white-space: nowrap; vertical-align: middle; }
.rep tr:nth-child(n+3) td { height: 11px; }
.rep .dash td { border-bottom-style: dashed; }
.rep .dash + tr td { border-top-style: dashed; }
.rep .in { padding-left: 5px; }
.rep td:nth-child(2):not([colspan]), .rep th:nth-child(2) { padding-left: 3px; }
.c1 { width: 129px; } .c2 { width: 43px; } .c3 { width: 58px; } .c4 { width: 36px; } .c5 { width: 58px; } .c6 { width: 36px; } .c7 { width: 50px; } .c8 { width: 94px; }
.pageno { padding: 9px 0 0 253px; font-size: 8px; line-height: 12px; }
```
FILE: sheet.js
```
const COLS = 37, ROWS = 31;
const colName = i => (i < 26 ? '' : 'A') + String.fromCharCode(65 + i % 26);
const colIndex = s => s.length > 1 ? 26 + s.charCodeAt(1) - 65 : s.charCodeAt(0) - 65;
const cells = {};
const D = '―';

function put(ref, text, cs = 1, rs = 1, cls = 'k') {
  const [, c, r] = ref.match(/([A-Z]+)(\d+)/);
  const ci = colIndex(c), ri = +r;
  for (let y = 0; y < rs; y++)
    for (let x = 0; x < cs; x++) cells[(ri + y) + ':' + (ci + x)] = null;
  cells[ri + ':' + ci] = { text, cs, rs, cls };
}
/* Fills a row from a start column; each value is text or [text, colspan, rowspan]. "" leaves a cell out. */
function line(row, start, values, cls = 'k', last = '') {
  let c = colIndex(start);
  values.forEach((v, i) => {
    const [t, cs = 1, rs = 1] = Array.isArray(v) ? v : [v];
    if (t !== '') put(colName(c) + row, t, cs, rs, cls + (i === values.length - 1 ? ' ' + last : ''));
    c += cs;
  });
}
const rep = (t, n) => Array(n).fill(t);
const pair = t => [t, 2];
const tall = (t, n = 2) => [t, 1, n];

put('A1', '捺印欄', 4, 1, 'k R');
put('A2', '', 2, 2, 'k B'); put('C2', '', 2, 2, 'k R B');
put('H1', '日報報告書', 11, 2, 'w title');
put('V1', '平成24年9月11日', 6, 2, 'w date');
for (let i = 4; i < 25; i++) put(colName(i) + 3, '', 1, 1, 'B');
put('V3', '', 1, 1, 'cur');
put('A4', '施設名', 2, 1, 'k R B'); put('C4', 'A棟', 23, 1, 'k R B');
put('A5', '送\n風\n機', 1, 5, 'k ml w side'); put('A10', '室温℃', 1, 1, 'k w side'); put('A11', '34', 1, 1, 'k r B');
['項目', '単位', D, '①', '②', '③', '④'].forEach((t, i) => put('B' + (5 + i), t, 1, 1, i === 6 ? 'k R B' : 'k R'));
line(5, 'C', ['電流値', '給油圧力', '給油温度', '吐出圧', '吐出温度', '吸込風量', '軸温m側', '軸温b側', '放風弁油圧', 'ベーン油圧', 'ベーン'].map(pair));
put('Y5', '運転\n状況', 1, 3, 'k ml R');
line(6, 'C', [...['A', 'kg/cm2', '℃', 'kg/cm2', '℃', 'm3/min', '℃', '℃', 'MPa', 'MPa'].map(pair), '%', '度']);
line(7, 'C', ['定格', '点検', ...rep(['基準', '点検'], 9).flat(), D, D]);
line(8, 'C', [tall('108'), '90', D, D, D, D, tall('0.62'), '0.56', tall('50<', 4), D, tall(D, 4), '12.4', ...rep(D, 10), 'V'], 'k', 'R');
line(9, 'C', ['', D, D, D, D, D, '', D, '', D, '', ...rep(D, 12)], 'k', 'R');
line(10, 'C', [tall('186'), '106', tall('>0.7'), '1.7', tall('<50'), '39.5', tall('0.58'), '0.55', '', '89', '', '20.8', tall('<75'), '41.5', tall('<75'), '42', tall('>0.6'), '1.29', tall('>0.6'), '1.18', '23', '-55', 'V'], 'k', 'R');
line(11, 'C', ['', D, '', D, '', D, '', D, '', D, '', D, '', D, '', D, '', D, '', D, D, D, D], 'k B', 'R');
['C10', 'E10', 'G10', 'I10', 'K8', 'M8', 'O10', 'Q10', 'S10', 'U10'].forEach(r => {
  const [, c, n] = r.match(/([A-Z])(\d+)/); cells[n + ':' + colIndex(c)].cls += ' B';
});
put('A12', '機器名', 2, 1, 'k R');
line(12, 'C', [['初沈掻寄機', 3], ['終沈掻寄機', 3], ['散気装置', 2], ['初沈スカムスキマー', 6], ['終沈スカムスキマー', 6], ['ろ過機', 2]], 'k', 'R');
put('A13', '号 機', 2, 1, 'k R');
const six = ['①', '②', '③', '④', '⑤', '⑥'];
line(13, 'C', ['①', '②', '③', '①', '②', '③', '③-①', '④-①', ...six, ...six, '湿式', '乾式'], 'k', 'R');
put('A14', '電流値'); put('B14', '定格', 1, 1, 'k R');
line(14, 'C', ['3.5', '3.5', '2.0', '3.5', '3.5', '2.0', '9.1', '9.1', ...rep(tall(D), 14)], 'k', 'R');
put('A15', '(A)'); put('B15', '点検', 1, 1, 'k R');
line(15, 'C', ['2', D, D, '2', '2', '1.38', '9.2', D]);
line(16, 'Q', [D, D, D, D, D, D, 'V', 'V'], 'k', 'R');
line(17, 'Q', rep('V', 8), 'k B', 'R');
for (let i = 17; i < 25; i++) put(colName(i) + 18, '', 1, 1, 'B');
put('R19', 'D棟', 8, 1, 'k R B');
put('R20', '汚水ポンプ', 4, 2); put('V20', '空気圧縮機\n（汚泥）', 2, 2, 'k ml');
put('X20', '除湿\n機', 1, 2, 'k ml'); put('Y20', '沈砂\n設備', 1, 2, 'k ml R');
line(22, 'R', ['①', '②', '③', '④', '①', '②', tall(D, 5), tall(D, 6)], 'k', 'R');
line(23, 'R', ['136', '', '136', '136', '8.5', '8.5']);
put('S23', '');
line(24, 'R', rep(D, 6));
line(25, 'R', [['>1.0', 4], ['7.0～8.5', 2]]);
line(26, 'R', [D, D, D, D, '8.2', '8.2']);
line(27, 'R', [D, D, D, D, D, D, 'V']);
line(28, 'R', rep('V', 8), 'k', 'R');
line(29, 'R', [[D, 7], D], 'k B', 'R');
for (const i of [17, 18, 20, 21, 22, 23, 24]) put(colName(i) + 30, '', 1, 1, 'w B');
put('T30', '', 1, 1, 'w');
put('R31', '', 2, 1, 'k R'); put('T31', '', 1, 1, 'R'); put('U31', '脱臭設備', 4); put('Y31', '計装');

let html = '<colgroup><col class="rh"><col class="ca">' + '<col class="cn">'.repeat(COLS - 1) + '</colgroup><thead><tr><th></th>';
for (let c = 0; c < COLS; c++) html += `<th${c === 21 ? ' class="lit"' : ''}>${c < COLS - 1 ? colName(c) : ''}</th>`;
html += '</tr></thead><tbody>';
for (let r = 1; r <= ROWS; r++) {
  const kind = r === 30 ? 'sliver' : r === 3 || r === 18 ? 'short' : '';
  html += `<tr class="${kind}"><th${r === 3 ? ' class="lit"' : ''}>${r < 30 ? r : ''}</th>`;
  for (let c = 0; c < COLS; c++) {
    const k = r + ':' + c;
    if (!(k in cells)) html += '<td></td>';
    else if (cells[k]) {
      const o = cells[k];
      html += `<td class="${o.cls}" colspan="${o.cs}" rowspan="${o.rs}">${o.text.replace('<', '&lt;')}</td>`;
    }
  }
  html += '</tr>';
}
document.getElementById('sheet').innerHTML = html + '</tbody>';
```
